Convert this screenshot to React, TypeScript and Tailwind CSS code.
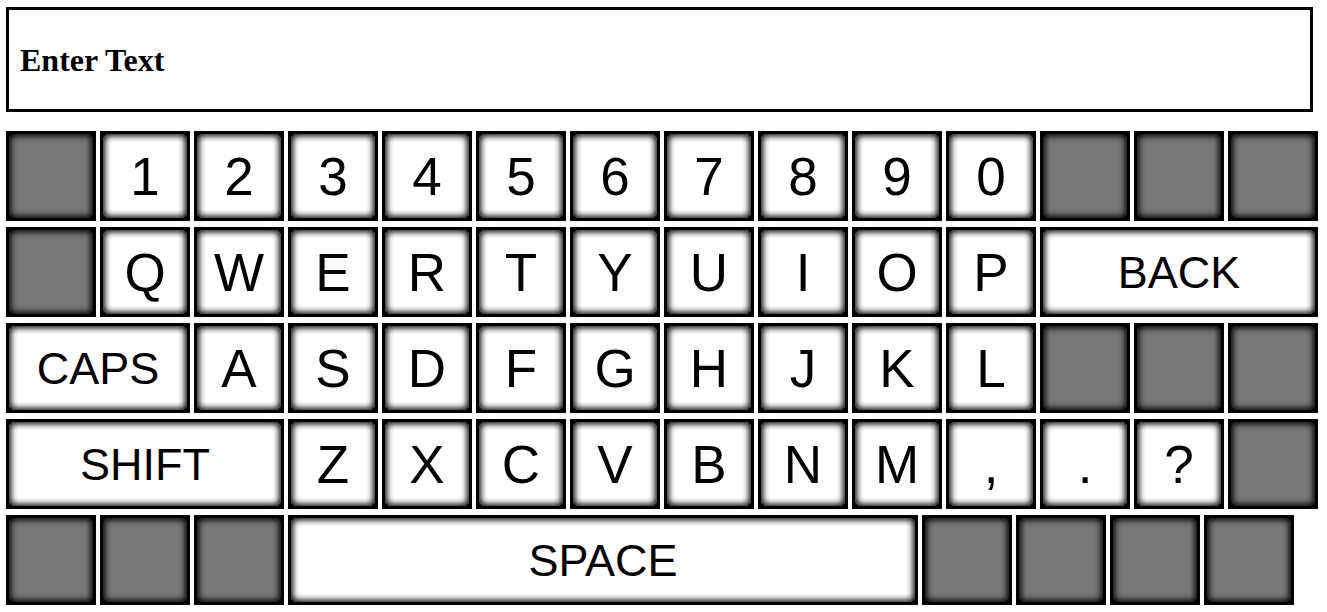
import React from "react";

type K = { label?: string; w?: number; gray?: boolean; small?: boolean };

const g: K = { gray: true };

const rows: K[][] = [
  [g, ..."1234567890".split("").map((c) => ({ label: c })), g, g, g],
  [g, ..."QWERTYUIOP".split("").map((c) => ({ label: c })), { label: "BACK", w: 278, small: true }],
  [{ label: "CAPS", w: 184, small: true }, ..."ASDFGHJKL".split("").map((c) => ({ label: c })), g, g, g],
  [{ label: "SHIFT", w: 278, small: true }, ..."ZXCVBNM,.?".split("").map((c) => ({ label: c })), g],
  [g, g, g, { label: "SPACE", w: 630, small: true }, g, g, g, g],
];

function Key({ k }: { k: K }) {
  return (
    <div className="h-[90px] shrink-0 bg-black p-[3px]" style={{ width: k.w ?? 90 }}>
      <div
        className={`flex h-full w-full items-center justify-center rounded-[6px] shadow-[inset_0_0_6px_2px_#000] ${
          k.gray ? "bg-[#777777]" : "bg-white"
        }`}
      >
        {k.label && (
          <span
            className={`font-['Liberation_Sans',Arial,sans-serif] leading-none text-black ${
              k.small ? "text-[45px]" : "text-[53px]"
            }`}
          >
            {k.label}
          </span>
        )}
      </div>
    </div>
  );
}

export default function App() {
  return (
    <div className="min-h-[612px] bg-white pl-[6px] pt-[7px]">
      <div className="flex h-[105px] w-[1307px] items-center border-[3px] border-black px-[11px]">
        <span className="font-['Liberation_Serif','Times_New_Roman',serif] text-[32px] font-bold text-black">Enter Text</span>
      </div>

      <div className="mt-[19px] flex flex-col gap-[6px]">
        {rows.map((r, i) => (
          <div key={i} className="flex gap-[4px]">
            {r.map((k, j) => (
              <Key key={j} k={k} />
            ))}
          </div>
        ))}
      </div>
    </div>
  );
}
